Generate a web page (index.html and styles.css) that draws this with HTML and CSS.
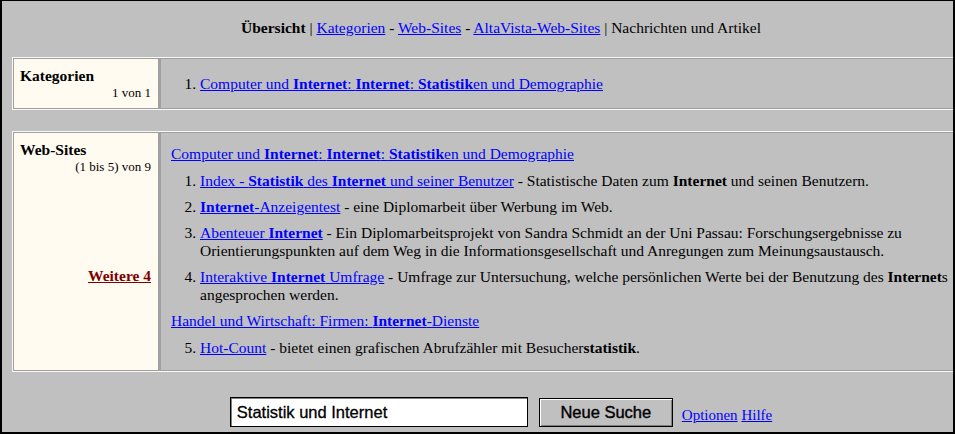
FILE: index.html
```html
<!DOCTYPE html>
<html lang="de">
<head>
  <meta charset="UTF-8">
  <title>AltaVista - Statistik und Internet</title>
  <link rel="stylesheet" href="styles.css">
</head>
<body>
  <div class="frame">
    <div class="page">

      <!-- Navigation -->
      <div class="top">
        <b>Übersicht</b> | <a href="#">Kategorien</a> - <a href="#">Web-Sites</a> - <a href="#">AltaVista-Web-Sites</a> | Nachrichten und Artikel
      </div>

      <!-- Kategorien -->
      <div class="box">
        <div class="side">
          <div class="side-title">Kategorien</div>
          <div class="side-count">1 von 1</div>
        </div>
        <div class="main main-center">
          <ol class="hits">
            <li><a href="#">Computer und <b>Internet</b>: <b>Internet</b>: <b>Statistik</b>en und Demographie</a></li>
          </ol>
        </div>
      </div>

      <!-- Web-Sites -->
      <div class="box box-sites">
        <div class="side">
          <div class="side-title">Web-Sites</div>
          <div class="side-count">(1 bis 5) von 9</div>
          <a class="more" href="#">Weitere 4</a>
        </div>
        <div class="main">
          <p class="cat"><a href="#">Computer und <b>Internet</b>: <b>Internet</b>: <b>Statistik</b>en und Demographie</a></p>
          <ol class="hits">
            <li><a href="#">Index - <b>Statistik</b> des <b>Internet</b> und seiner Benutzer</a> - Statistische Daten zum <b>Internet</b> und seinen Benutzern.</li>
            <li><a href="#"><b>Internet</b>-Anzeigentest</a> - eine Diplomarbeit über Werbung im Web.</li>
            <li><a href="#">Abenteuer <b>Internet</b></a> - Ein Diplomarbeitsprojekt von Sandra Schmidt an der Uni Passau: Forschungsergebnisse zu Orientierungspunkten auf dem Weg in die Informationsgesellschaft und Anregungen zum Meinungsaustausch.</li>
            <li><a href="#">Interaktive <b>Internet</b> Umfrage</a> - Umfrage zur Untersuchung, welche persönlichen Werte bei der Benutzung des <b>Internet</b>s angesprochen werden.</li>
          </ol>
          <p class="cat"><a href="#">Handel und Wirtschaft: Firmen: <b>Internet</b>-Dienste</a></p>
          <ol class="hits" start="5">
            <li><a href="#">Hot-Count</a> - bietet einen grafischen Abrufzähler mit Besucher<b>statistik</b>.</li>
          </ol>
        </div>
      </div>

      <!-- Suche -->
      <form class="search" onsubmit="return false">
        <input class="query" type="text" value="Statistik und Internet">
        <button class="go" type="submit">Neue Suche</button>
        <span class="extra"><a href="#">Optionen</a> <a href="#">Hilfe</a></span>
      </form>

    </div>
  </div>
</body>
</html>
```

FILE: styles.css
```css
body {
  margin: 0;
  padding: 0;
  background-color: #c0c0c0;
  font-family: "Liberation Serif", "Times New Roman", serif;
  font-size: 15.5px;
  line-height: 18px;
  color: #000;
}

a {
  color: #0000ff;
}

.frame {
  width: 955px;
  height: 434px;
  box-sizing: border-box;
  border: 2px solid #000;
  border-top-width: 1px;
  overflow: hidden;
  background-color: #c0c0c0;
}

.page {
  width: 978px;
  margin-left: 10px;
}

.top {
  padding-top: 18px;
  text-align: center;
}

.box {
  display: flex;
  margin-top: 20px;
  border: 1px solid #f8f8f8;
}

.box-sites {
  margin-top: 21px;
}

.side {
  width: 146px;
  box-sizing: border-box;
  padding: 8px 7px 7px 6px;
  background-color: #fffbf0;
  border: 1px solid #a0a0a0;
  display: flex;
  flex-direction: column;
}

.side-title {
  font-weight: bold;
}

.side-count {
  font-size: 13px;
  line-height: 16px;
  text-align: right;
}

.more {
  margin-top: 92px;
  align-self: flex-end;
  color: #800000;
  font-weight: bold;
}

.main {
  flex: 1;
  padding: 12px 10px 13px 10px;
  border: 1px solid #a0a0a0;
  border-left-width: 2px;
}

.main-center {
  display: flex;
  align-items: center;
  padding-top: 0;
  padding-bottom: 0;
}

.cat {
  margin: 0 0 9px 0;
}

.hits {
  margin: 0 0 8px 0;
  padding-left: 29px;
}

.hits li {
  margin-bottom: 8px;
}

.hits li:last-child {
  margin-bottom: 0;
}

.main-center .hits {
  margin: 0;
}

.main > .hits:last-child {
  margin-bottom: 0;
}

.search {
  display: flex;
  align-items: center;
  justify-content: center;
  margin-top: 25px;
}

.query {
  width: 298px;
  height: 30px;
  box-sizing: border-box;
  margin: 0;
  padding: 0 6px;
  border: 1px solid #000;
  box-shadow: inset 1px 1px #808080;
  background-color: #fff;
  font-family: "Liberation Sans", Arial, sans-serif;
  font-size: 16.5px;
  -webkit-text-stroke: 0.3px #000;
  color: #000;
}

.go {
  width: 134px;
  height: 29px;
  margin: 0 0 0 11px;
  padding: 0;
  border: 1px solid #000;
  box-shadow: inset 1px 1px #fff, inset -1px -1px #808080;
  background-color: #c0c0c0;
  font-family: "Liberation Sans", Arial, sans-serif;
  font-size: 16.5px;
  -webkit-text-stroke: 0.4px #000;
  color: #000;
}

.extra {
  margin-left: 9px;
  margin-top: 6px;
  font-size: 15px;
}
```
